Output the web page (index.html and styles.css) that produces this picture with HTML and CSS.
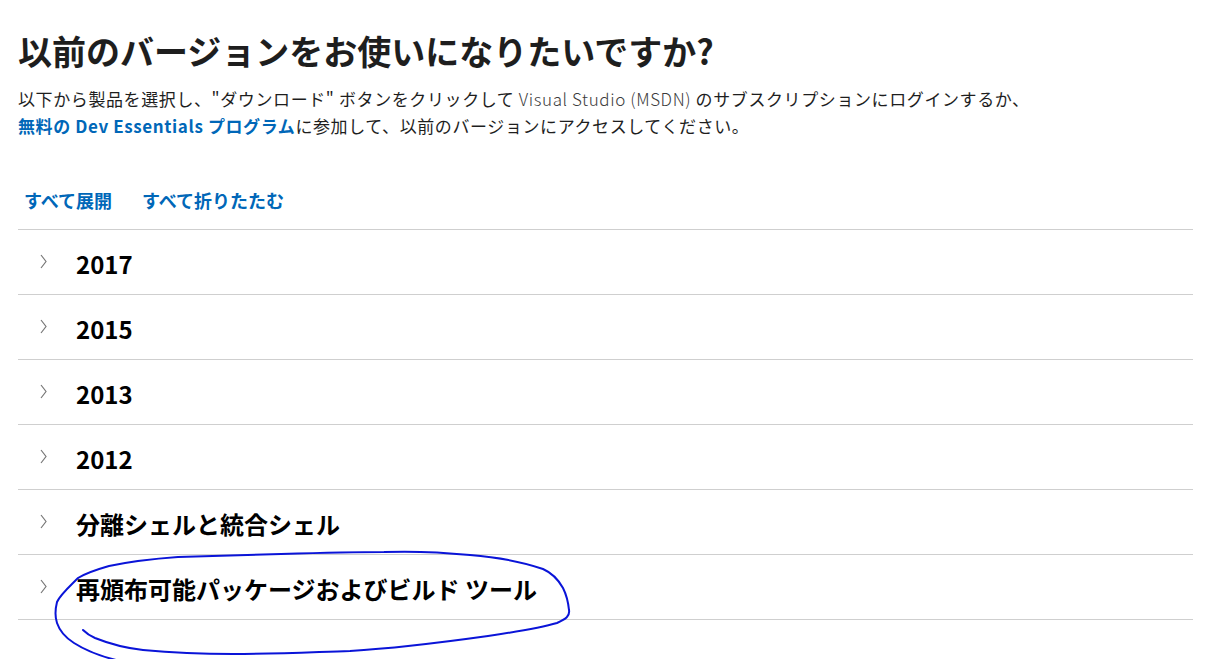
FILE: index.html
```html
<!DOCTYPE html>
<html lang="ja">
<head>
  <meta charset="UTF-8" />
  <title>以前のバージョン</title>
  <link rel="stylesheet" href="styles.css">
</head>
<body>

<div class="page">
  <h1>以前のバージョンをお使いになりたいですか?</h1>
  <p class="intro">
    以下から製品を選択し、"ダウンロード" ボタンをクリックして <span class="light">Visual Studio (MSDN)</span> のサブスクリプションにログインするか、<br>
    <a class="strong-link" href="#">無料の Dev Essentials プログラム</a>に参加して、以前のバージョンにアクセスしてください。
  </p>

  <div class="toggles">
    <a href="#">すべて展開</a>
    <a href="#">すべて折りたたむ</a>
  </div>

  <ul class="versions">
    <li><svg class="chev" width="7" height="15" viewBox="0 0 7 15"><polyline points="1,1 6,7.5 1,14"/></svg><span class="title">2017</span></li>
    <li><svg class="chev" width="7" height="15" viewBox="0 0 7 15"><polyline points="1,1 6,7.5 1,14"/></svg><span class="title">2015</span></li>
    <li><svg class="chev" width="7" height="15" viewBox="0 0 7 15"><polyline points="1,1 6,7.5 1,14"/></svg><span class="title">2013</span></li>
    <li><svg class="chev" width="7" height="15" viewBox="0 0 7 15"><polyline points="1,1 6,7.5 1,14"/></svg><span class="title">2012</span></li>
    <li><svg class="chev" width="7" height="15" viewBox="0 0 7 15"><polyline points="1,1 6,7.5 1,14"/></svg><span class="title">分離シェルと統合シェル</span></li>
    <li><svg class="chev" width="7" height="15" viewBox="0 0 7 15"><polyline points="1,1 6,7.5 1,14"/></svg><span class="title">再頒布可能パッケージおよびビルド ツール</span></li>
  </ul>
</div>

<!-- hand-drawn marker around the last row -->
<svg class="scribble" width="1224" height="659" viewBox="0 0 1224 659">
  <path d="M83 630 C86 633 88 635 95 638 C110 644 125 648 143 650 C175 653 200 654 233 654 C280 654 315 652 350 651 C400 648 445 642 488 636 C515 632 540 628 557 623 C566 619 570 616 569 610 C568 600 566 594 563 588 C558 579 552 573 543 569 C520 561 495 557 470 555 C440 552 412 551 384 552 C350 552 315 553 281 554 C245 555 210 556 178 557 C150 559 128 562 109 566 C95 570 86 573 78 578 C68 588 60 595 57 602 C55 610 55 617 57 623 C60 632 66 638 74 643 C88 652 100 656 116 660"
        fill="none" stroke="#0a14d8" stroke-width="2" stroke-linecap="round"/>
</svg>

</body>
</html>
```

FILE: styles.css
```css
body {
  margin: 0;
  background: #fff;
  font-family: "Noto Sans CJK JP", "Noto Sans", sans-serif;
  color: #1e1e1e;
}
.page {
  padding: 27px 31px 0 18px;
}
h1 {
  font-size: 34px;
  font-weight: 700;
  line-height: 1.3;
  padding-top: 2px;
  margin: 0 0 12px;
  color: #1e1e1e;
}
.intro {
  font-size: 17px;
  letter-spacing: 0.6px;
  line-height: 27px;
  margin: 0;
}
.intro .light {
  font-weight: 300;
  color: #3c3c3c;
}
.strong-link {
  color: #0067b8;
  font-weight: 700;
  text-decoration: none;
}
.toggles {
  display: flex;
  gap: 30px;
  padding: 48px 0 0 6px;
  height: 42px;
  box-sizing: content-box;
}
.toggles a {
  color: #0067b8;
  font-size: 18px;
  font-weight: 700;
  text-decoration: none;
  line-height: 26px;
}
.versions {
  list-style: none;
  margin: 0;
  padding: 0;
  border-top: 1px solid #cfcfcf;
}
.versions li {
  display: flex;
  align-items: center;
  height: 64px;
  border-bottom: 1px solid #cfcfcf;
}
.chev {
  margin: 0 0 1px 22px;
  fill: none;
  stroke: #777;
  stroke-width: 1.2;
}
.title {
  margin-left: 29px;
  font-size: 24px;
  font-weight: 700;
  color: #000;
  padding-top: 2px;
}
.scribble {
  position: absolute;
  left: 0;
  top: 0;
  pointer-events: none;
}
```
